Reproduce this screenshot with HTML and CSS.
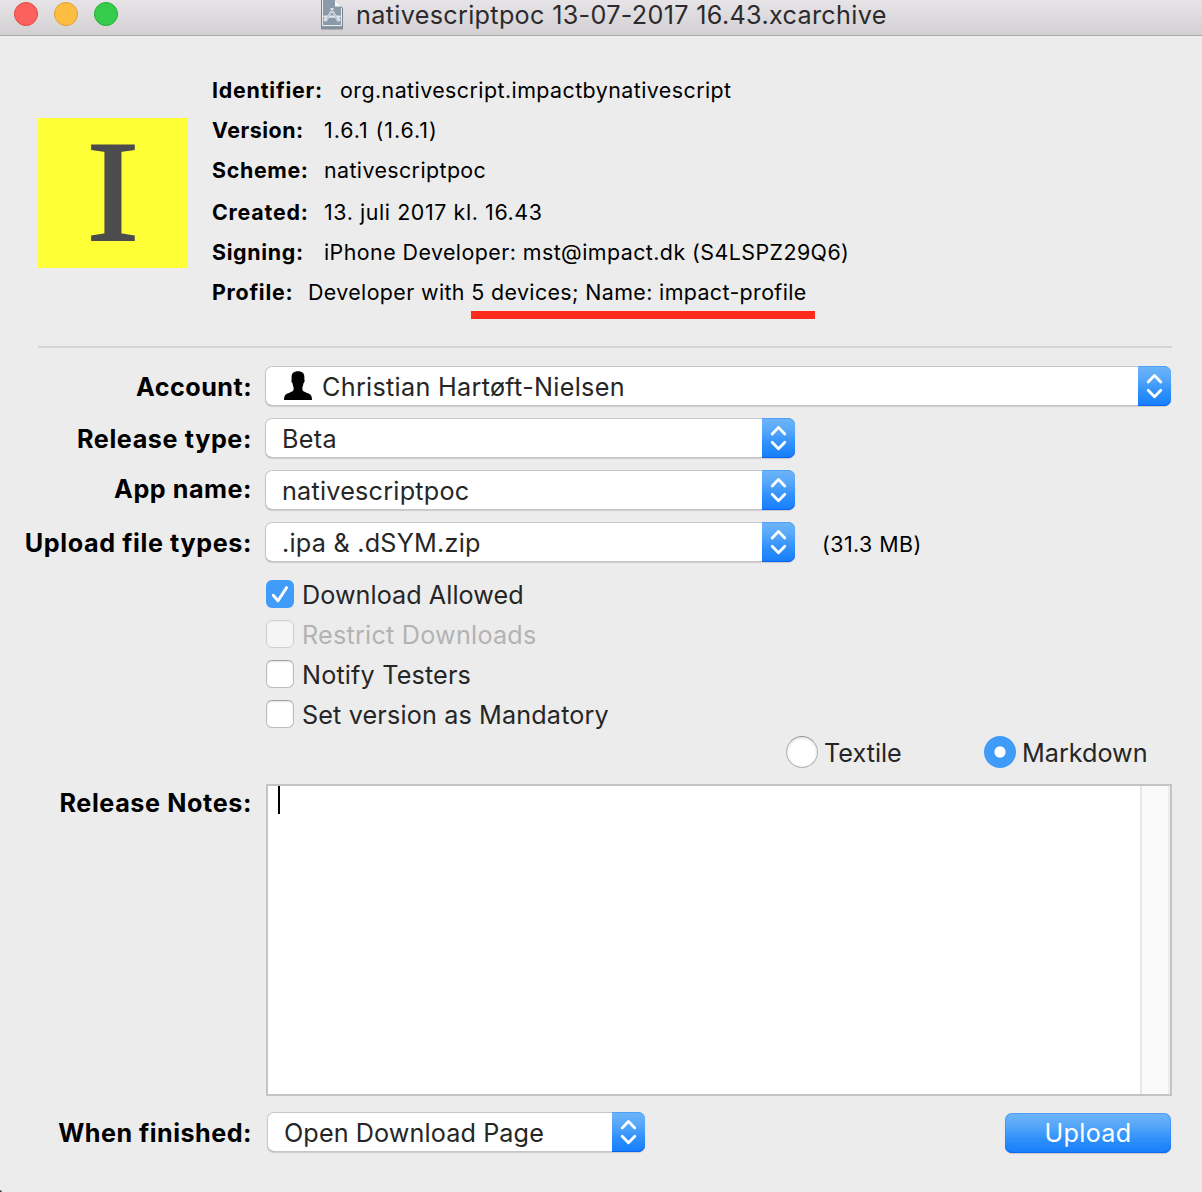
FILE: index.html
```html
<!DOCTYPE html>
<html lang="en">
<head>
<meta charset="utf-8">
<title>nativescriptpoc 13-07-2017 16.43.xcarchive</title>
<link rel="stylesheet" href="styles.css">
</head>
<body>
<svg class="defs" width="0" height="0" aria-hidden="true">
  <symbol id="updown" viewBox="0 0 33 40">
    <path d="M10.2 16 L16.5 9.4 L22.8 16 M10.2 24.2 L16.5 30.8 L22.8 24.2" fill="none" stroke="#fff" stroke-width="2.8" stroke-linecap="round" stroke-linejoin="round"/>
  </symbol>
</svg>
<div class="window">
  <header class="titlebar">
    <div class="lights">
      <span class="light close"></span>
      <span class="light minimize"></span>
      <span class="light zoom"></span>
    </div>
    <svg class="doc-icon" width="24" height="32" viewBox="0 0 24 32">
      <path d="M1 0 H15 L23 8 V28.5 H1 Z" fill="#8b9aa8"/>
      <path d="M2.5 0 V25.5 H21.5 V8" fill="none" stroke="#e9edf0" stroke-width="1"/>
      <path d="M1.5 28 H22.5 M1.5 0 V28 M22.5 8 V28" stroke="#76848f" stroke-width="1" fill="none"/>
      <path d="M15 0 V6.5 H21.5 Z" fill="#f6f7f8"/>
      <path d="M6 20.5 L12.6 9 M11.4 9 L18 20.5 M4.2 16.6 H19.8 M4.5 20 L6.3 18 M17.7 18 L19.6 20" fill="none" stroke="#dfe5ea" stroke-width="2.1" stroke-linecap="round"/>
      <path d="M6.4 19.8 L12 10.2 L17.6 19.8" fill="none" stroke="#8b9aa8" stroke-width="0.6"/>
    </svg>
    <h1 class="title">nativescriptpoc 13-07-2017 16.43.xcarchive</h1>
  </header>

  <section class="summary">
    <div class="app-icon"><span>I</span></div>
    <dl class="facts">
      <div class="fact"><dt class="wide t79">Identifier:</dt><dd class="t44">org.nativescript.impactbynativescript</dd></div>
      <div class="fact"><dt class="t52">Version:</dt><dd class="t95">1.6.1 (1.6.1)</dd></div>
      <div class="fact"><dt class="t66">Scheme:</dt><dd class="t40">nativescriptpoc</dd></div>
      <div class="fact spaced"><dt class="t79">Created:</dt><dd class="t60">13. juli 2017 kl. 16.43</dd></div>
      <div class="fact"><dt class="t66">Signing:</dt><dd class="t44">iPhone Developer: mst@impact.dk (S4LSPZ29Q6)</dd></div>
      <div class="fact"><dt class="narrow t75">Profile:</dt><dd class="t38">Developer with <span class="marked">5 devices; Name: impact-profile</span></dd></div>
    </dl>
  </section>

  <hr class="divider">

  <main class="form">
    <div class="row">
      <label class="label t45">Account:</label>
      <div class="popup full">
        <svg class="person" width="28" height="30" viewBox="0 0 28 30">
          <path d="M14 0.2 C18.4 0.2 20.6 2.4 20.4 6.6 L20.3 8.2 C21 8.6 20.7 11.3 19.6 12 C19.2 14 18.8 15.2 18.4 16.2 V18.8 C19.2 21.6 25.6 22 27 24.4 C27.8 25.8 28 27.2 28 29 H0 C0 27.2 0.2 25.8 1 24.4 C2.4 22 8.8 21.6 9.6 18.8 V16.2 C9.2 15.2 8.8 14 8.4 12 C7.3 11.3 7 8.6 7.7 8.2 L7.6 6.6 C7.4 2.4 9.6 0.2 14 0.2 Z" fill="#000"/>
        </svg>
        <span class="value t30">Christian Hartøft-Nielsen</span>
        <span class="arrows"><svg width="33" height="40"><use href="#updown"/></svg></span>
      </div>
    </div>
    <div class="row">
      <label class="label t60">Release type:</label>
      <div class="popup medium">
        <span class="value t30">Beta</span>
        <span class="arrows"><svg width="33" height="40"><use href="#updown"/></svg></span>
      </div>
    </div>
    <div class="row">
      <label class="label raised t52">App name:</label>
      <div class="popup medium">
        <span class="value t23">nativescriptpoc</span>
        <span class="arrows"><svg width="33" height="40"><use href="#updown"/></svg></span>
      </div>
    </div>
    <div class="row">
      <label class="label t60">Upload file types:</label>
      <div class="popup medium">
        <span class="value t23">.ipa &amp; .dSYM.zip</span>
        <span class="arrows"><svg width="33" height="40"><use href="#updown"/></svg></span>
      </div>
      <span class="size t45">(31.3 MB)</span>
    </div>

    <div class="checks">
      <div class="check">
        <span class="box on"><svg width="28" height="28" viewBox="0 0 28 28"><path d="M7.2 15.2 L12 20.8 L20.6 7.6" fill="none" stroke="#fff" stroke-width="2.9" stroke-linecap="round" stroke-linejoin="round"/></svg></span>
        <span class="t05">Download Allowed</span>
      </div>
      <div class="check disabled"><span class="box"></span><span class="t23">Restrict Downloads</span></div>
      <div class="check"><span class="box"></span><span class="t17">Notify Testers</span></div>
      <div class="check"><span class="box"></span><span class="t14">Set version as Mandatory</span></div>
    </div>

    <div class="radios">
      <div class="radio textile"><span class="dot"></span><span>Textile</span></div>
      <div class="radio"><span class="dot on"></span><span>Markdown</span></div>
    </div>

    <div class="notes-row">
      <label class="label t60">Release Notes:</label>
      <div class="notes">
        <div class="notes-text"><span class="caret"></span></div>
        <div class="scroll-track"></div>
      </div>
    </div>

    <div class="footer">
      <label class="label t48">When finished:</label>
      <div class="popup small">
        <span class="value t10">Open Download Page</span>
        <span class="arrows"><svg width="33" height="40"><use href="#updown"/></svg></span>
      </div>
      <button class="upload t30" type="button">Upload</button>
    </div>
  </main>
</div>
</body>
</html>
```
FILE: styles.css
```css
* { box-sizing: border-box; }

body {
  margin: 0;
  background: #ececec;
  color: #000;
  font-family: Inter, Roboto, "Liberation Sans", sans-serif;
}

.defs { display: block; }

.window {
  width: 1202px;
  height: 1192px;
  overflow: hidden;
  background: radial-gradient(circle at 0 100%, #3a3a3a 1px, #ececec 2.5px);
}

/* Letter spacing steps, in hundredths of a pixel */
.t05 { letter-spacing: 0.05px; }
.t10 { letter-spacing: 0.1px; }
.t14 { letter-spacing: 0.14px; }
.t17 { letter-spacing: 0.17px; }
.t23 { letter-spacing: 0.23px; }
.t30 { letter-spacing: 0.3px; }
.t38 { letter-spacing: 0.38px; }
.t40 { letter-spacing: 0.4px; }
.t44 { letter-spacing: 0.44px; }
.t45 { letter-spacing: 0.45px; }
.t48 { letter-spacing: 0.48px; }
.t52 { letter-spacing: 0.52px; }
.t60 { letter-spacing: 0.6px; }
.t66 { letter-spacing: 0.66px; }
.t75 { letter-spacing: 0.75px; }
.t79 { letter-spacing: 0.79px; }
.t95 { letter-spacing: 0.95px; }

/* Title bar */
.titlebar {
  display: flex;
  height: 36px;
  padding-left: 14px;
  background: linear-gradient(#e6e4e6, #d2d0d2);
  border-bottom: 1px solid #acaaac;
}

.lights {
  display: flex;
  gap: 16px;
  margin-top: 2px;
}

.light {
  width: 24px;
  height: 24px;
  border: 1px solid;
  border-radius: 50%;
}

.close { background: #fd615d; border-color: #e24741; }
.minimize { background: #fdbd41; border-color: #e09f3a; }
.zoom { background: #35cb4b; border-color: #26ad35; }

.doc-icon {
  margin-left: 202px;
  filter: drop-shadow(0 1px 0.5px rgba(0, 0, 0, 0.25));
}

.title {
  margin: 0 0 0 12px;
  color: #2d2a2d;
  font-size: 25.2px;
  font-weight: 400;
  line-height: 30px;
  letter-spacing: 0.32px;
  white-space: nowrap;
}

/* Archive summary */
.summary {
  display: flex;
  height: 310px;
  padding: 34px 30px 0 38px;
}

.app-icon {
  width: 150px;
  height: 150px;
  margin: 48px 24px 0 0;
  background: #ffff38;
  color: #4c4c4c;
  font-family: "Liberation Serif", serif;
  font-size: 144px;
  line-height: 147px;
  text-align: center;
}

.app-icon span {
  display: block;
  transform: scaleX(1.1);
  -webkit-text-stroke: 2px #4c4c4c;
}

.facts { margin: 0; }

.fact {
  display: flex;
  height: 40px;
  font-size: 21.4px;
  line-height: 40px;
  white-space: nowrap;
}

.fact.spaced { margin-top: 2px; }

.fact dt {
  width: 112px;
  font-weight: 700;
}

.fact .wide { width: 128px; }
.fact .narrow { width: 96px; }
.fact dd { margin: 0; }

.marked { position: relative; }

.marked::after {
  content: "";
  position: absolute;
  left: 0;
  right: -8px;
  bottom: -14px;
  height: 8px;
  background: #ff2a1c;
}

.divider {
  width: 1134px;
  height: 2px;
  margin: 0 0 18px 38px;
  border: 0;
  background: #d4d4d4;
}

/* Form */
.row {
  display: flex;
  height: 40px;
  margin-bottom: 12px;
}

.label {
  width: 252px;
  margin-right: 13px;
  font-size: 25.2px;
  font-weight: 700;
  line-height: 42px;
  text-align: right;
  white-space: nowrap;
}

.label.raised { line-height: 38px; }

.popup {
  display: flex;
  height: 40px;
  padding-left: 17px;
  background: #fff;
  border-radius: 7px;
  box-shadow: inset 0 0 0 1px #c6c6c6, inset 0 -1px 0 #a8a8a8, 0 1px 1px rgba(0, 0, 0, 0.14);
  color: #262626;
  font-size: 25.2px;
  line-height: 42px;
  white-space: nowrap;
}

.full { width: 906px; }
.medium { width: 530px; }
.small { width: 378px; }

.person { margin: 5px 10px 0 2px; }

.arrows {
  width: 33px;
  height: 40px;
  margin-left: auto;
  border-radius: 0 7px 7px 0;
  background: linear-gradient(#6fb4f9, #58a8f9 30%, #2f90fb 65%, #157efb);
  box-shadow: inset 0 1px 0 #4ea1f5, inset 0 -1px 0 #0a62f5;
}

.arrows svg { display: block; }

.size {
  margin-left: 27px;
  font-size: 21.4px;
  line-height: 44px;
}

.checks {
  padding: 6px 0 0 266px;
  color: #262626;
  font-size: 25.2px;
}

.check {
  display: flex;
  gap: 8px;
  height: 40px;
  line-height: 30px;
}

.box {
  width: 28px;
  height: 28px;
  border: 1px solid #bcbcbc;
  border-top-color: #a4a4a4;
  border-radius: 6px;
  background: #fff;
  box-shadow: inset 0 1px 2px rgba(0, 0, 0, 0.12);
}

.box.on {
  border: 0;
  background: #419bf9;
  box-shadow: none;
}

.box svg { display: block; }

.disabled { color: #b3b3b3; }

.disabled .box {
  border-color: #cfcfcf;
  background: #f5f5f5;
  box-shadow: inset 0 1px 1px rgba(0, 0, 0, 0.04);
}

.radios {
  display: flex;
  height: 48px;
  margin-top: -4px;
  padding-left: 786px;
  color: #262626;
  font-size: 25.2px;
  line-height: 34px;
}

.radio {
  display: flex;
  gap: 6px;
}

.textile { width: 198px; }

.dot {
  width: 32px;
  height: 32px;
  border: 1px solid #b4b4b4;
  border-top-color: #989898;
  border-radius: 50%;
  background: #fff;
  box-shadow: inset 0 1px 3px rgba(0, 0, 0, 0.16);
}

.dot.on {
  border: 0;
  background: radial-gradient(circle, #fff 5.2px, #419bf9 6px);
  box-shadow: none;
}

.notes-row {
  display: flex;
  height: 312px;
}

.notes-row .label {
  margin-right: 14px;
  line-height: 38px;
}

.notes {
  display: flex;
  width: 906px;
  height: 312px;
  border: 2px solid #c4c4c4;
  background: #fff;
}

.notes-text {
  flex: 1;
  padding-left: 10px;
}

.caret {
  display: block;
  width: 2px;
  height: 28px;
  background: #000;
}

.scroll-track {
  width: 30px;
  border-left: 2px solid #e8e8e8;
  border-right: 2px solid #ededed;
  background: #fafafa;
}

.footer {
  display: flex;
  margin-top: 16px;
}

.footer .label { margin-right: 15px; }

.upload {
  width: 166px;
  height: 40px;
  margin: 1px 0 0 360px;
  padding: 0;
  border: 0;
  border-radius: 7px;
  background: linear-gradient(#6fb4f9, #58a8f9 30%, #2f90fb 65%, #157efb);
  box-shadow: inset 0 0 0 1px rgba(30, 120, 240, 0.35), inset 0 -1px 0 #0a62f5, 0 1px 1px rgba(0, 0, 0, 0.15);
  color: #fff;
  font-family: inherit;
  font-size: 25.2px;
  line-height: 40px;
}
```
